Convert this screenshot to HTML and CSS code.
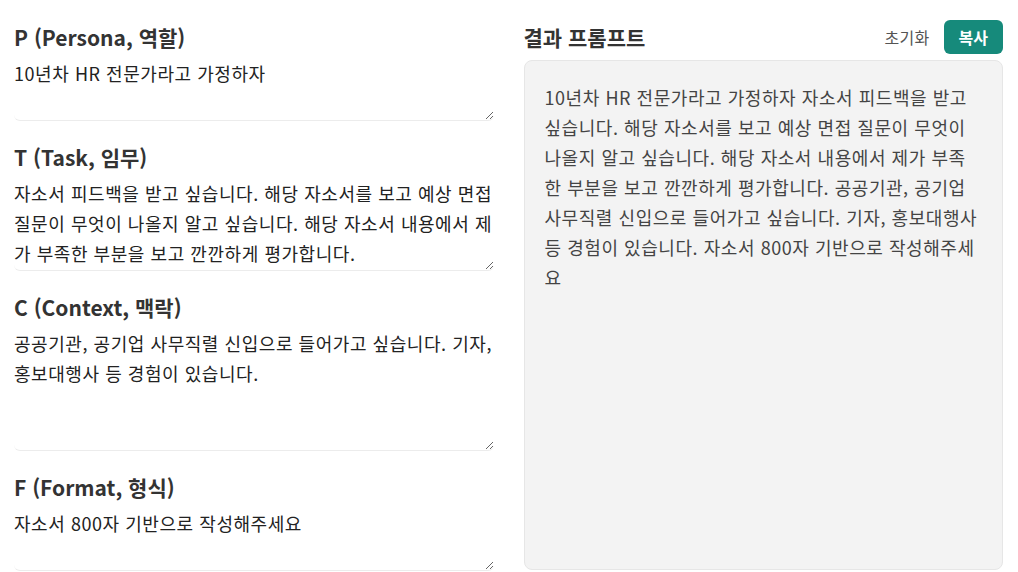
FILE: index.html
```html
<!DOCTYPE html>
<html lang="ko">
<head>
<meta charset="utf-8">
<title>PTCF 프롬프트</title>
<link rel="stylesheet" href="styles.css">
</head>
<body>
<div class="page">
  <div class="inputs">
    <section class="field">
      <h2 class="field-title">P (Persona, 역할)</h2>
      <textarea class="field-input rows-2">10년차 HR 전문가라고 가정하자</textarea>
    </section>
    <section class="field">
      <h2 class="field-title">T (Task, 임무)</h2>
      <textarea class="field-input rows-3">자소서 피드백을 받고 싶습니다. 해당 자소서를 보고 예상 면접 질문이 무엇이 나올지 알고 싶습니다. 해당 자소서 내용에서 제가 부족한 부분을 보고 깐깐하게 평가합니다.</textarea>
    </section>
    <section class="field">
      <h2 class="field-title">C (Context, 맥락)</h2>
      <textarea class="field-input rows-4">공공기관, 공기업 사무직렬 신입으로 들어가고 싶습니다. 기자, 홍보대행사 등 경험이 있습니다.</textarea>
    </section>
    <section class="field">
      <h2 class="field-title">F (Format, 형식)</h2>
      <textarea class="field-input rows-2">자소서 800자 기반으로 작성해주세요</textarea>
    </section>
  </div>
  <div class="result">
    <div class="result-header">
      <h2 class="result-title">결과 프롬프트</h2>
      <div class="actions">
        <button class="btn-reset" type="button">초기화</button>
        <button class="btn-copy" type="button">복사</button>
      </div>
    </div>
    <div class="result-box">10년차 HR 전문가라고 가정하자 자소서 피드백을 받고 싶습니다. 해당 자소서를 보고 예상 면접 질문이 무엇이 나올지 알고 싶습니다. 해당 자소서 내용에서 제가 부족한 부분을 보고 깐깐하게 평가합니다. 공공기관, 공기업 사무직렬 신입으로 들어가고 싶습니다. 기자, 홍보대행사 등 경험이 있습니다. 자소서 800자 기반으로 작성해주세요</div>
  </div>
</div>
</body>
</html>
```

FILE: styles.css
```css
* { box-sizing: border-box; }
html, body { margin: 0; background: #fff; }
body {
  font-family: "Noto Sans CJK KR", "Noto Sans", sans-serif;
  color: #222;
}
.page {
  display: grid;
  grid-template-columns: 1fr 1fr;
  column-gap: 30px;
  padding: 20px 15px 0 14px;
  height: 572px;
  overflow: hidden;
}
.inputs {
  display: flex;
  flex-direction: column;
  gap: 22px;
  padding-top: 3px;
}
.field { display: flex; flex-direction: column; gap: 6px; }
.field-title {
  margin: 0;
  font-size: 21px;
  line-height: 28px;
  font-weight: 700;
  color: #333;
}
.field-input {
  display: block;
  width: 100%;
  margin: 0;
  padding: 1px 0 3px;
  border: none;
  border-bottom: 1px solid #ececec;
  border-radius: 6px;
  font-family: inherit;
  font-size: 18px;
  letter-spacing: 0.55px;
  line-height: 30px;
  color: #222;
  background: #fff;
  resize: vertical;
  outline: none;
  overflow: hidden;
}
.rows-2 { height: 64px; }
.rows-3 { height: 94px; }
.rows-4 { height: 124px; }

.result { display: flex; flex-direction: column; gap: 6px; }
.result-header {
  display: flex;
  align-items: center;
  justify-content: space-between;
  height: 34px;
}
.result-title {
  margin: 0;
  font-size: 21px;
  line-height: 28px;
  font-weight: 700;
  color: #333;
}
.actions { display: flex; align-items: center; gap: 14px; }
.btn-reset {
  border: none;
  background: none;
  padding: 0;
  font-family: inherit;
  font-size: 16px;
  letter-spacing: 0.3px;
  color: #555;
}
.btn-copy {
  border: none;
  background: #168a7b;
  color: #fff;
  font-family: inherit;
  font-size: 16px;
  font-weight: 700;
  height: 34px;
  padding: 0 15px;
  border-radius: 6px;
}
.result-box {
  height: 510px;
  background: #f3f3f3;
  border: 1px solid #e6e6e6;
  border-radius: 8px;
  padding: 21px 23px 21px 20px;
  font-size: 18px;
  letter-spacing: 0.55px;
  line-height: 30px;
  color: #444;
  white-space: pre-wrap;
}
```
